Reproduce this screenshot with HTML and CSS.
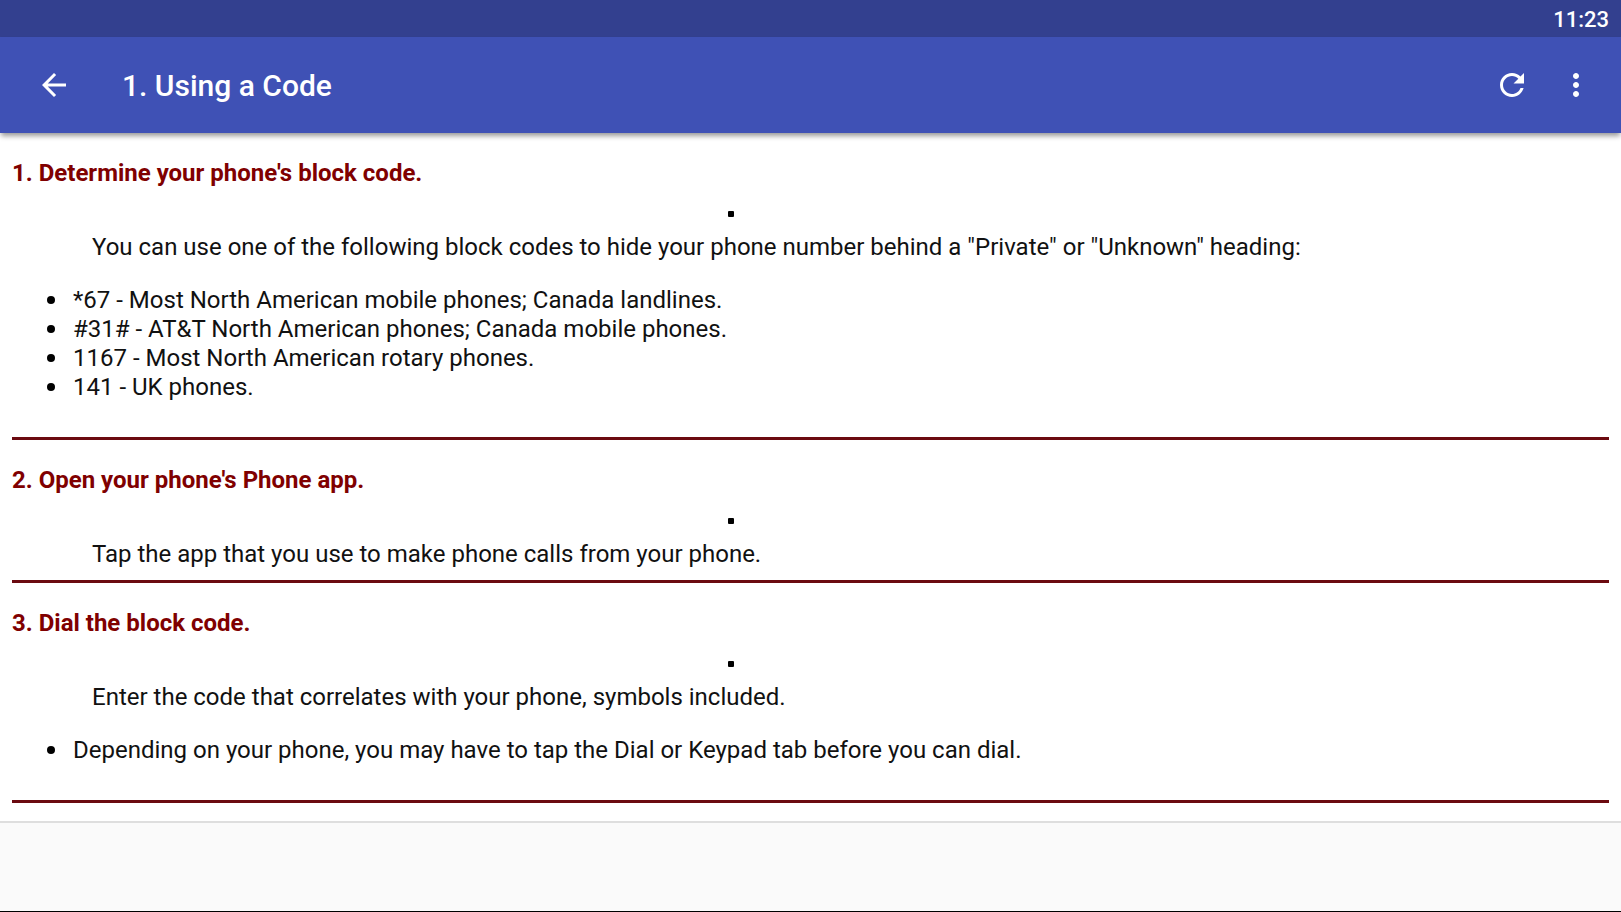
FILE: index.html
```html
<!DOCTYPE html>
<html lang="en">
<head>
<meta charset="utf-8">
<meta name="viewport" content="width=device-width, initial-scale=1">
<title>1. Using a Code</title>
<link rel="stylesheet" href="styles.css">
</head>
<body>
<div class="status-bar"><time>11:23</time></div>
<header class="app-bar">
  <button class="icon-button" type="button" aria-label="Back">
    <svg viewBox="0 0 24 24" aria-hidden="true"><path d="M20 11H7.83l5.59-5.59L12 4l-8 8 8 8 1.41-1.41L7.83 13H20v-2z"/></svg>
  </button>
  <h1 class="title">1. Using a Code</h1>
  <button class="icon-button" type="button" aria-label="Refresh">
    <svg viewBox="0 0 24 24" aria-hidden="true"><path d="M17.65 6.35C16.2 4.9 14.21 4 12 4c-4.42 0-7.99 3.58-7.99 8s3.57 8 7.99 8c3.73 0 6.84-2.55 7.73-6h-2.08c-.82 2.33-3.04 4-5.65 4-3.31 0-6-2.69-6-6s2.69-6 6-6c1.66 0 3.14.69 4.22 1.78L13 11h7V4l-2.35 2.35z"/></svg>
  </button>
  <button class="icon-button" type="button" aria-label="More options">
    <svg viewBox="0 0 24 24" aria-hidden="true"><path d="M12 8c1.1 0 2-.9 2-2s-.9-2-2-2-2 .9-2 2 .9 2 2 2zm0 2c-1.1 0-2 .9-2 2s.9 2 2 2 2-.9 2-2-.9-2-2-2zm0 6c-1.1 0-2 .9-2 2s.9 2 2 2 2-.9 2-2-.9-2-2-2z"/></svg>
  </button>
</header>
<main class="content">
  <section class="step">
    <h2>1. Determine your phone's block code.</h2>
    <div class="marker"></div>
    <p>You can use one of the following block codes to hide your phone number behind a "Private" or "Unknown" heading:</p>
    <ul>
      <li>*67 - Most North American mobile phones; Canada landlines.</li>
      <li>#31# - AT&amp;T North American phones; Canada mobile phones.</li>
      <li>1167 - Most North American rotary phones.</li>
      <li>141 - UK phones.</li>
    </ul>
  </section>
  <section class="step">
    <h2>2. Open your phone's Phone app.</h2>
    <div class="marker"></div>
    <p>Tap the app that you use to make phone calls from your phone.</p>
  </section>
  <section class="step">
    <h2>3. Dial the block code.</h2>
    <div class="marker"></div>
    <p>Enter the code that correlates with your phone, symbols included.</p>
    <ul>
      <li>Depending on your phone, you may have to tap the Dial or Keypad tab before you can dial.</li>
    </ul>
  </section>
</main>
<footer class="bottom-bar"></footer>
</body>
</html>
```

FILE: styles.css
```css
* { box-sizing: border-box; }

body {
  margin: 0;
  min-height: 100vh;
  display: flex;
  flex-direction: column;
  background: #fff;
  color: #111;
  font-family: Roboto, "Noto Sans", sans-serif;
  font-size: 24px;
  line-height: 29px;
}

.status-bar {
  display: flex;
  justify-content: flex-end;
  align-items: center;
  height: 37px;
  padding: 1px 12px 0;
  background: #33408f;
  color: #fff;
  font-size: 22px;
  font-weight: 500;
}

.app-bar {
  display: flex;
  align-items: center;
  height: 96px;
  padding: 0 13px 0 22px;
  background: #3f51b5;
  color: #fff;
  box-shadow: 0 4px 5px -1px rgba(0, 0, 0, 0.4);
}

.title {
  flex: 1;
  margin: 0 0 0 36px;
  padding-top: 2px;
  font-size: 30px;
  line-height: 36px;
  font-weight: 500;
}

.icon-button {
  display: grid;
  place-items: center;
  width: 64px;
  height: 64px;
  padding: 0;
  border: 0;
  background: none;
  color: inherit;
}

.icon-button svg {
  width: 36px;
  height: 36px;
  fill: currentColor;
}

.content { padding: 0 12px 18px; }

.step {
  padding: 26px 0 11px;
  border-bottom: 3px solid #6b0a10;
}

.step h2 {
  margin: 0;
  color: #800000;
  font-size: 24px;
  font-weight: 700;
}

.step p {
  margin: 0;
  padding-left: 80px;
}

.step ul {
  margin: 24px 0;
  padding-left: 35px;
  list-style: none;
}

.step li {
  display: flex;
  gap: 18px;
}

.step li::before {
  content: "";
  flex: none;
  width: 8px;
  height: 8px;
  margin-top: 10px;
  border-radius: 50%;
  background: #000;
}

.marker {
  height: 45px;
  padding: 23px 0 0 716px;
}

.marker::before {
  content: "";
  display: block;
  width: 6px;
  height: 6px;
  border-radius: 1px;
  background: #000;
}

.bottom-bar {
  flex: 1;
  border-top: 2px solid #dedede;
  border-bottom: 1px solid #000;
  background: #fafafa;
}
```
